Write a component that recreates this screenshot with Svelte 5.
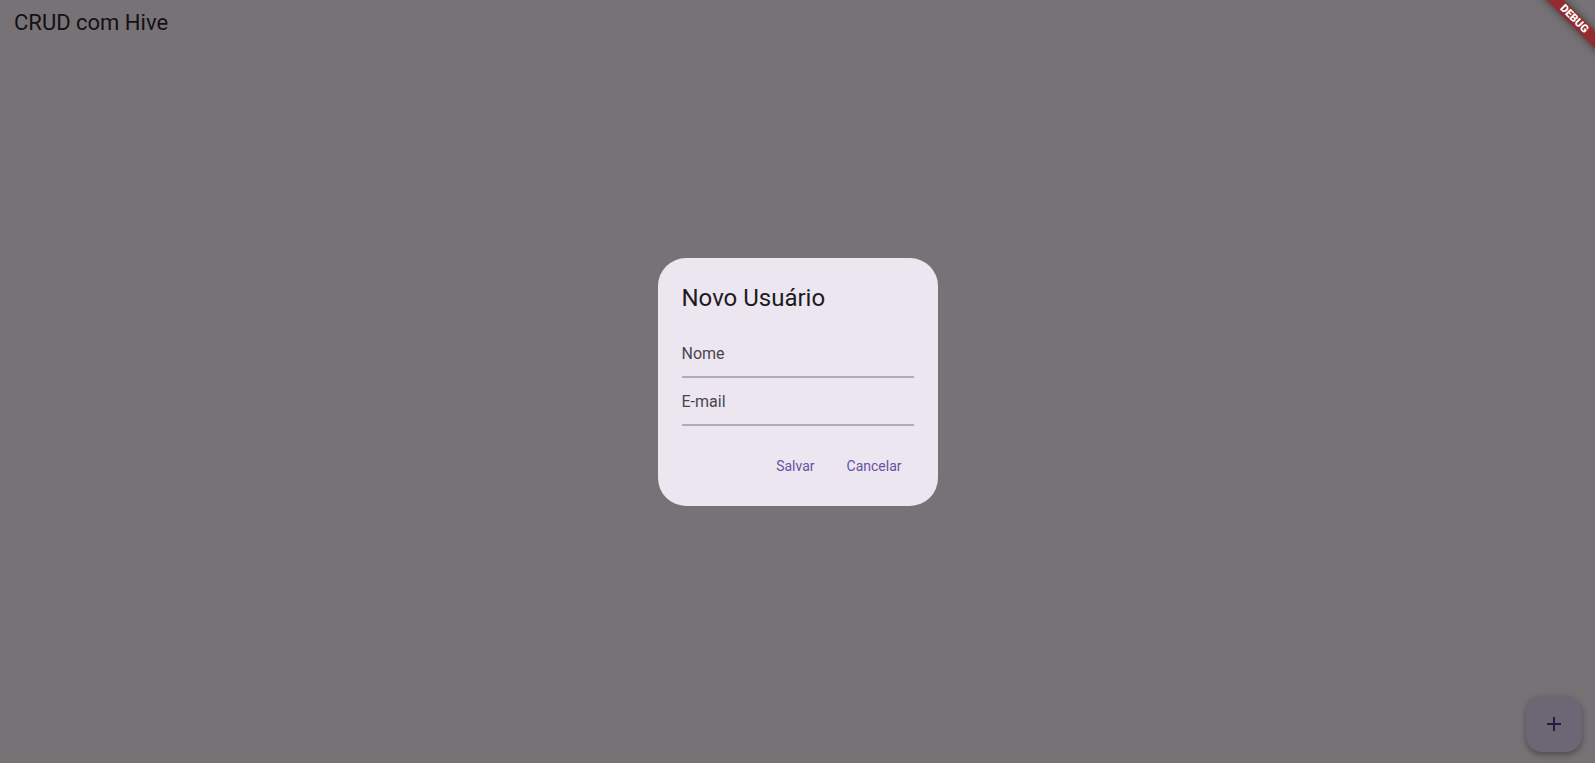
<script lang="ts">
  let name = $state('');
  let email = $state('');
</script>

<div class="page">
  <header><h1>CRUD com Hive</h1></header>

  <main>
    <form class="dialog" role="dialog" aria-labelledby="dialog-title" onsubmit={(e) => e.preventDefault()}>
      <h2 id="dialog-title">Novo Usuário</h2>
      <div class="fields">
        <div class="field">
          <input id="name" type="text" placeholder=" " bind:value={name} />
          <label for="name">Nome</label>
        </div>
        <div class="field">
          <input id="email" type="email" placeholder=" " bind:value={email} />
          <label for="email">E-mail</label>
        </div>
      </div>
      <div class="actions">
        <button type="submit">Salvar</button>
        <button type="button">Cancelar</button>
      </div>
    </form>
  </main>

  <button class="fab" type="button" aria-label="+">
    <svg width="24" height="24" viewBox="0 0 24 24" aria-hidden="true">
      <path d="M19 13h-6v6h-2v-6H5v-2h6V5h2v6h6z" fill="currentColor" />
    </svg>
  </button>

  <div class="banner"><span>DEBUG</span></div>
</div>

<style>
  :global(body) {
    background: #777275;
  }

  .page {
    position: relative;
    display: flex;
    flex-direction: column;
    min-height: 100vh;
    overflow: hidden;
    background: #777275;
    font-family: Roboto, sans-serif;
  }

  header {
    position: absolute;
    inset: 0 0 auto;
    padding: 9px 14px;
  }

  h1,
  h2 {
    margin: 0;
    font-weight: 400;
  }

  h1 {
    font-size: 22px;
    line-height: 28px;
    color: #121113;
  }

  main {
    flex: 1;
    display: flex;
    align-items: center;
    justify-content: center;
  }

  .dialog {
    box-sizing: border-box;
    min-width: 280px;
    padding: 24px;
    border-radius: 28px;
    background: #ece6f0;
  }

  h2 {
    font-size: 24px;
    line-height: 32px;
    color: #1d1b20;
  }

  .fields {
    display: grid;
    padding: 16px 0 24px;
  }

  .field {
    display: grid;
    height: 48px;
  }

  .field > * {
    grid-area: 1 / 1;
  }

  .field input {
    box-sizing: border-box;
    width: 100%;
    min-width: 0;
    height: 48px;
    padding: 0;
    border: 0;
    border-bottom: 2px solid #b2abb8;
    border-radius: 0;
    outline: 0;
    background: none;
    font: 16px/24px Roboto, sans-serif;
    color: #1d1b20;
  }

  .field label {
    align-self: center;
    justify-self: start;
    font-size: 16px;
    line-height: 24px;
    color: #49454f;
    pointer-events: none;
  }

  .field input:not(:placeholder-shown) + label {
    align-self: start;
    font-size: 12px;
    line-height: 16px;
  }

  .actions {
    display: flex;
    justify-content: flex-end;
    gap: 8px;
  }

  .actions button {
    height: 32px;
    padding: 0 12px;
    border: 0;
    border-radius: 16px;
    background: none;
    font: 400 14px/20px Roboto, sans-serif;
    color: #6750a4;
    cursor: pointer;
  }

  .fab {
    position: absolute;
    right: 13px;
    bottom: 11px;
    display: grid;
    place-items: center;
    width: 56px;
    height: 56px;
    padding: 0;
    border: 0;
    border-radius: 16px;
    background: #6c6675;
    color: #241a44;
    box-shadow: 0 3px 5px rgb(0 0 0 / 20%), 0 2px 8px rgb(0 0 0 / 16%);
    cursor: pointer;
  }

  .banner {
    position: absolute;
    top: 13px;
    right: -29px;
    width: 100px;
    height: 12px;
    transform: rotate(45deg);
    background: #942b2f;
    box-shadow: 0 0 8px rgb(0 0 0 / 50%);
    text-align: center;
    font-size: 11px;
    font-weight: 900;
    line-height: 12px;
    color: #fff;
  }
</style>
